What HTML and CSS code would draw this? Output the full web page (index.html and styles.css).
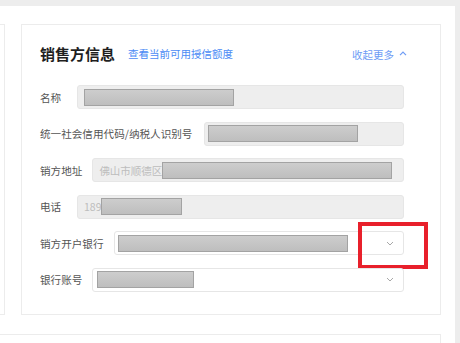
FILE: index.html
```html
<!DOCTYPE html>
<html lang="zh-CN">
<head>
    <meta charset="UTF-8">
    <meta name="viewport" content="width=device-width, initial-scale=1.0">
    <title>销售方信息</title>
    <link rel="stylesheet" href="styles.css">
</head>
<body>
    <div class="panel">
        <div class="cards-row">
            <div class="side-card"></div>

            <section class="card">
                <div class="card-header">
                    <h2 class="card-title">销售方信息</h2>
                    <a href="#" class="credit-link">查看当前可用授信额度</a>
                    <a href="#" class="collapse-link">
                        收起更多
                        <svg class="chevron-up" width="8" height="5" viewBox="0 0 8 5">
                            <path d="M1 4.2 L4 1.2 L7 4.2" fill="none" stroke="currentColor" stroke-width="1.2"/>
                        </svg>
                    </a>
                </div>

                <div class="form">
                    <div class="form-row">
                        <label class="form-label">名称</label>
                        <div class="field field-disabled">
                            <span class="mask mask-name"></span>
                        </div>
                    </div>

                    <div class="form-row">
                        <label class="form-label label-long">统一社会信用代码/纳税人识别号</label>
                        <div class="field field-disabled field-tight">
                            <span class="mask mask-code"></span>
                        </div>
                    </div>

                    <div class="form-row">
                        <label class="form-label">销方地址</label>
                        <div class="field field-disabled">
                            <span class="field-text">佛山市顺德区</span>
                            <span class="mask mask-address"></span>
                        </div>
                    </div>

                    <div class="form-row">
                        <label class="form-label">电话</label>
                        <div class="field field-disabled">
                            <span class="field-text">189</span>
                            <span class="mask mask-phone"></span>
                        </div>
                    </div>

                    <div class="form-row">
                        <label class="form-label">销方开户银行</label>
                        <div class="field field-select field-tight">
                            <span class="mask mask-bank"></span>
                            <svg class="chevron-down" width="8" height="5" viewBox="0 0 8 5">
                                <path d="M1 1 L4 4 L7 1" fill="none" stroke="currentColor" stroke-width="1"/>
                            </svg>
                        </div>
                        <div class="highlight-box"></div>
                    </div>

                    <div class="form-row">
                        <label class="form-label">银行账号</label>
                        <div class="field field-select">
                            <span class="mask mask-account"></span>
                            <svg class="chevron-down" width="8" height="5" viewBox="0 0 8 5">
                                <path d="M1 1 L4 4 L7 1" fill="none" stroke="currentColor" stroke-width="1"/>
                            </svg>
                        </div>
                    </div>
                </div>
            </section>
        </div>

        <div class="bottom-card"></div>
    </div>
</body>
</html>
```

FILE: styles.css
```css
* {
    margin: 0;
    padding: 0;
    box-sizing: border-box;
    font-family: "Noto Sans CJK SC", "Noto Sans", sans-serif;
}

body {
    background-color: #ededed;
    color: #555;
    height: 343px;
    overflow: hidden;
}

.panel {
    background-color: #fff;
    margin-top: 6px;
    margin-right: 5px;
    padding-top: 18px;
    height: 337px;
    overflow: hidden;
}

.cards-row {
    display: flex;
    gap: 16px;
}

.side-card {
    width: 5px;
    border: 1px solid #ececec;
    border-left: none;
}

.card {
    width: 420px;
    border: 1px solid #ececec;
    padding: 19px 36px 22px 18px;
}

.card-header {
    display: flex;
    align-items: center;
    height: 20px;
    margin-bottom: 21px;
}

.card-title {
    font-size: 15px;
    font-weight: bold;
    color: #1f1f1f;
    line-height: 20px;
}

.credit-link {
    margin-left: 13px;
    font-size: 10.5px;
    color: #4b8bf5;
    text-decoration: none;
    margin-top: -2px;
}

.collapse-link {
    margin-left: auto;
    margin-right: -3px;
    display: flex;
    align-items: center;
    gap: 5px;
    font-size: 10.5px;
    color: #6e9cf5;
    text-decoration: none;
}

.chevron-up {
    margin-top: -1px;
}

.form {
    display: flex;
    flex-direction: column;
    gap: 12.6px;
}

.form-row {
    position: relative;
    display: flex;
    align-items: center;
    height: 24px;
}

.form-label {
    min-width: 37px;
    padding-right: 10px;
    font-size: 10.6px;
    color: #555;
    white-space: nowrap;
}

.label-long {
    padding-right: 12px;
}

.field {
    flex: 1;
    height: 24px;
    display: flex;
    align-items: center;
    padding: 0 6px;
    border: 1px solid #e6e6e6;
    border-radius: 3px;
    font-size: 10.5px;
}

.field-disabled {
    background-color: #eeeeee;
}

.field-select {
    background-color: #fff;
    padding-left: 4px;
    padding-right: 9px;
}

.field-tight {
    padding-left: 3px;
}

.field-text {
    color: #bdbdbd;
}

.mask {
    display: block;
    height: 17px;
    border: 1px solid #a3a3a3;
    background: linear-gradient(#cdcdcd, #bebebe);
}

.mask-name { width: 150px; }
.mask-code { width: 150px; }
.mask-address { width: 230px; }
.mask-phone { width: 81px; }
.mask-bank { width: 230px; }
.mask-account { width: 97px; }

.chevron-down {
    margin-left: auto;
    color: #a8a8a8;
}

.highlight-box {
    position: absolute;
    right: -24px;
    top: -9px;
    width: 70px;
    height: 47px;
    border: 4px solid #e8202b;
}

.bottom-card {
    width: 441px;
    height: 10px;
    margin-top: 19px;
    border: 1px solid #ececec;
    border-bottom: none;
    border-left: none;
}
```
